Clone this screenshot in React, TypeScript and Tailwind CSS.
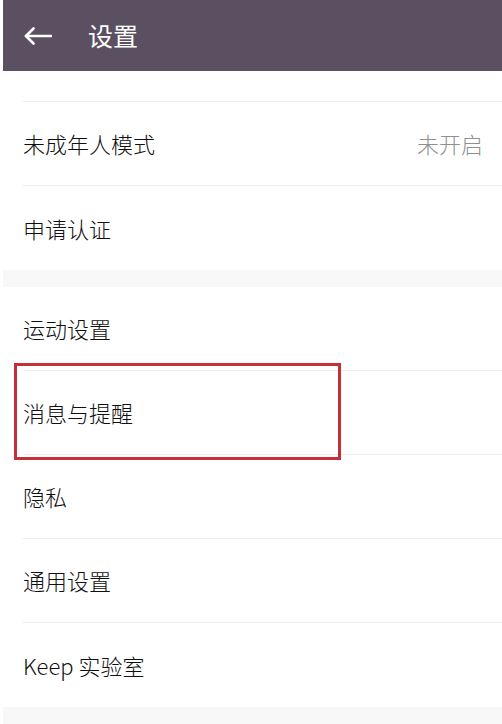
const font = { fontFamily: '"Noto Sans CJK SC", "Noto Sans", sans-serif' };

function Row({ label, value, last }: { label: string; value?: string; last?: boolean }) {
  return (
    <div className="pl-[20px]">
      <div
        className={
          "flex h-[84px] items-center justify-between pr-[19px] " +
          (last ? "" : "border-b border-[#ececec]")
        }
      >
        <span className="text-[22px] font-light text-[#0f0f0f]">{label}</span>
        {value && <span className="text-[22px] font-light text-[#8f8f8f]">{value}</span>}
      </div>
    </div>
  );
}

export default function App() {
  return (
    <div className="relative h-[724px] w-[502px] overflow-hidden bg-white pl-[3px]" style={font}>
      {/* 顶栏 */}
      <div className="flex h-[71px] items-center bg-[#5a5061] pl-[21px] text-white">
        <svg width="28" height="18" viewBox="0 0 28 18" fill="none" stroke="currentColor" strokeWidth="2.6" strokeLinecap="round" strokeLinejoin="round">
          <path d="M27 9H2" />
          <path d="M9.5 1.5L2 9l7.5 7.5" />
        </svg>
        <span className="ml-[36px] text-[25px] leading-none">设置</span>
      </div>

      <div className="h-[31px] pl-[20px]">
        <div className="h-full border-b border-[#ececec]" />
      </div>
      <Row label="未成年人模式" value="未开启" />
      <Row label="申请认证" last />

      <div className="h-[17px] bg-[#f8f8f8]" />

      <Row label="运动设置" />
      <Row label="消息与提醒" />
      <Row label="隐私" />
      <Row label="通用设置" />
      <Row label="Keep 实验室" last />

      <div className="h-[20px] bg-[#f8f8f8]" />

      {/* 标注框 */}
      <div className="pointer-events-none absolute left-[14px] top-[363px] h-[97px] w-[327px] border-[3px] border-[#c3303c]" />
    </div>
  );
}
